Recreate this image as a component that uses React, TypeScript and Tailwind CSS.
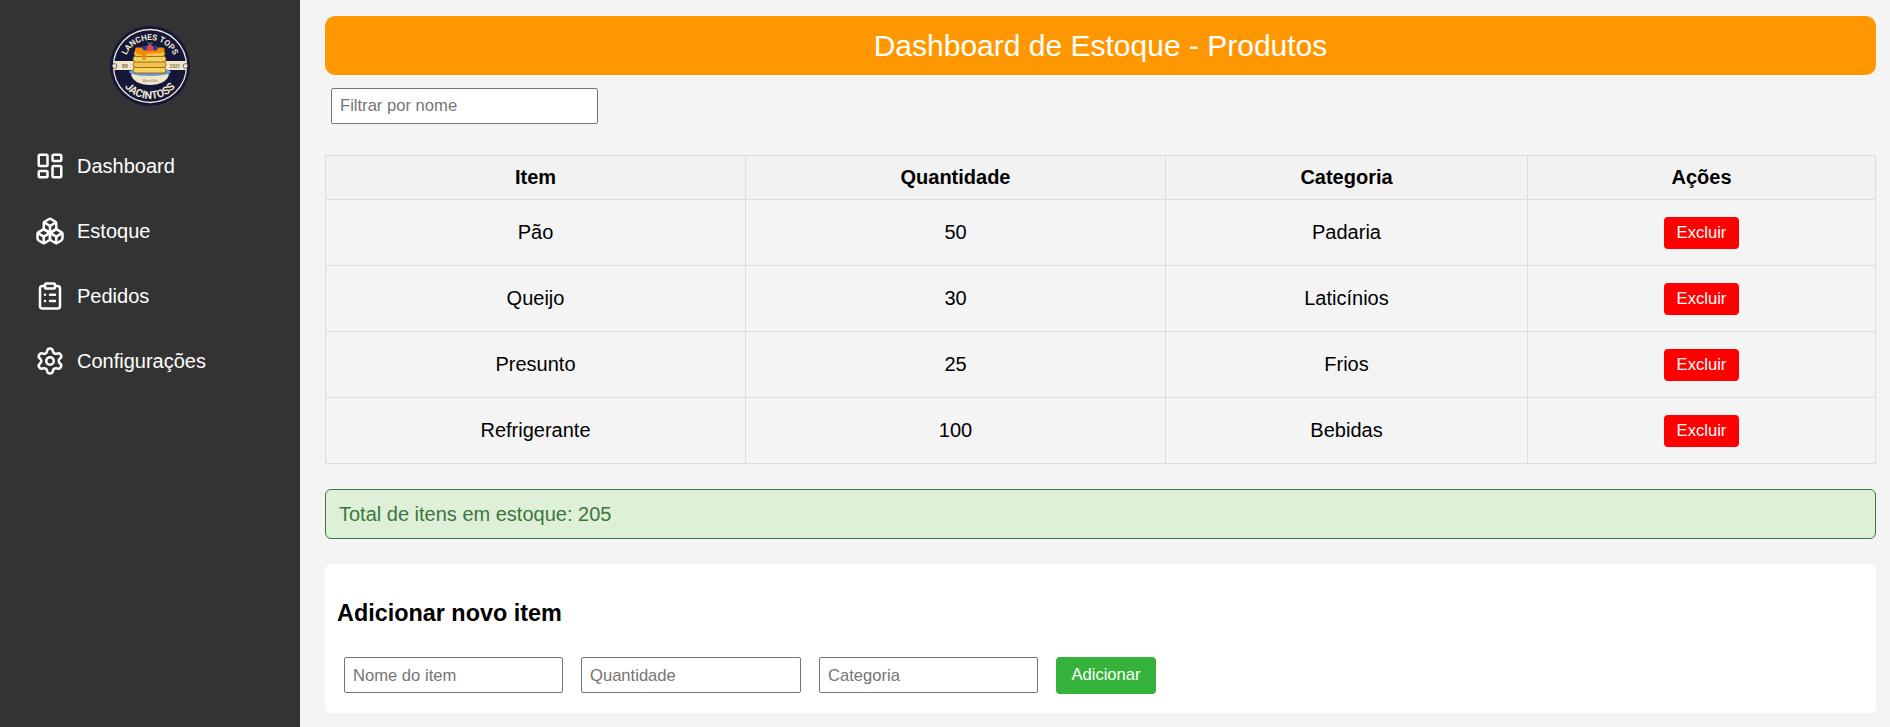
import { Boxes, ClipboardList, LayoutDashboard, Settings } from 'lucide-react';

const menu = [
  { label: 'Dashboard', Icon: LayoutDashboard },
  { label: 'Estoque', Icon: Boxes },
  { label: 'Pedidos', Icon: ClipboardList },
  { label: 'Configurações', Icon: Settings },
];

const items = [
  { name: 'Pão', qty: 50, category: 'Padaria' },
  { name: 'Queijo', qty: 30, category: 'Laticínios' },
  { name: 'Presunto', qty: 25, category: 'Frios' },
  { name: 'Refrigerante', qty: 100, category: 'Bebidas' },
];

function Logo() {
  return (
    <svg viewBox="0 0 80 80" className="w-[80px] h-[80px]">
      <defs>
        <path id="arcTop" d="M14 40 A26 26 0 0 1 66 40" />
        <path id="arcBottom" d="M7 40 A33 33 0 0 0 73 40" />
      </defs>
      <circle cx="40" cy="40" r="40" fill="#14173a" />
      <circle cx="40" cy="40" r="36.5" fill="none" stroke="#efe6cc" strokeWidth="1.3" />
      <rect x="4" y="35" width="72" height="9" fill="#efe6cc" />
      <circle cx="4.5" cy="40" r="2.4" fill="#efe6cc" stroke="#14173a" strokeWidth="0.6" />
      <circle cx="75.5" cy="40" r="2.4" fill="#efe6cc" stroke="#14173a" strokeWidth="0.6" />
      <path d="M21 48 H59 C58 55 50 59 40 59 C30 59 22 55 21 48 Z" fill="#efe6cc" />
      <text fontFamily="'Liberation Sans Narrow', Roboto, sans-serif" fontWeight="700" fontSize="8.2" fill="#efe6cc">
        <textPath href="#arcTop" startOffset="50%" textAnchor="middle">LANCHES TOPS</textPath>
      </text>
      <text fontFamily="'Liberation Sans Narrow', Roboto, sans-serif" fontWeight="700" fontSize="10.8" fill="#efe6cc">
        <textPath href="#arcBottom" startOffset="50%" textAnchor="middle">JACINTOSS</textPath>
      </text>
      <text x="15" y="41.5" fontFamily="Roboto, sans-serif" fontWeight="700" fontSize="4.5" fill="#8a6d3b" textAnchor="middle">BR</text>
      <text x="65" y="41.5" fontFamily="Roboto, sans-serif" fontWeight="700" fontSize="4.5" fill="#8a6d3b" textAnchor="middle">2021</text>
      <text x="40" y="55.5" fontFamily="Liberation Serif, serif" fontStyle="italic" fontSize="4.5" fill="#7d6238" textAnchor="middle">Brasília</text>
      <ellipse cx="40" cy="46" rx="21" ry="4" fill="#6f9ccf" />
      <rect x="23" y="41" width="33" height="6" rx="3" fill="#f5d260" stroke="#8a5a12" strokeWidth="0.8" />
      <rect x="23" y="35.5" width="33" height="6" rx="3" fill="#f2c14e" stroke="#8a5a12" strokeWidth="0.8" />
      <rect x="23" y="30" width="33" height="6" rx="3" fill="#f5d260" stroke="#8a5a12" strokeWidth="0.8" />
      <rect x="24" y="24.5" width="31" height="6" rx="3" fill="#f2c14e" stroke="#8a5a12" strokeWidth="0.8" />
      <path d="M26 21.5 H53 C56 23 55 27 50 27 C44 27 40 28 36 28 V32 A2 2 0 0 1 32 32 V29 C27 29 23 26 26 21.5 Z" fill="#f08c00" />
      <circle cx="35" cy="22" r="2.6" fill="#2c3f8f" />
      <circle cx="45" cy="22" r="2.6" fill="#2c3f8f" />
      <circle cx="40" cy="22" r="3.2" fill="#ef3f5a" />
      <path d="M40 18.5 L37.5 16.5 M40 18.5 L42.5 16.5" stroke="#2f9e44" strokeWidth="1.3" />
    </svg>
  );
}

export default function App() {
  return (
    <div className="flex h-screen overflow-hidden bg-[#f4f4f4] font-['Liberation_Sans',Arial,sans-serif] text-black">
      <aside className="w-[300px] shrink-0 bg-[#333333] text-white">
        <div className="flex justify-center pt-[26px]">
          <Logo />
        </div>
        <nav className="mt-[43px] flex flex-col gap-[32px] pl-[35px]">
          {menu.map(({ label, Icon }) => (
            <a key={label} href="#" className="flex h-[33px] items-center gap-[12px] text-[20px]">
              <Icon className="w-[30px] h-[30px]" strokeWidth={2} />
              {label}
            </a>
          ))}
        </nav>
      </aside>

      <main className="flex-1 pt-[16px] pl-[25px] pr-[14px]">
        <h1 className="h-[59px] rounded-[10px] bg-[#ff9800] text-center text-[30px] leading-[59px] text-white">
          Dashboard de Estoque - Produtos
        </h1>
        <div className="mt-[13px] ml-[6px]">
          <input
            placeholder="Filtrar por nome"
            className="block w-[267px] h-[36px] rounded-[2px] border border-[#767676] bg-white px-[8px] text-[16.6px] placeholder:text-[#757575]"
          />
        </div>

        <table className="mt-[31px] w-full table-fixed border-collapse text-[20px]">
          <thead>
            <tr className="h-[44px] bg-[#f2f2f2]">
              <th className="w-[420px] border border-[#dddddd] pb-[2px] font-bold">Item</th>
              <th className="w-[420px] border border-[#dddddd] pb-[2px] font-bold">Quantidade</th>
              <th className="w-[362px] border border-[#dddddd] pb-[2px] font-bold">Categoria</th>
              <th className="border border-[#dddddd] pb-[2px] font-bold">Ações</th>
            </tr>
          </thead>
          <tbody>
            {items.map(item => (
              <tr key={item.name} className="h-[66px]">
                <td className="border border-[#dddddd] pb-[2px] text-center">{item.name}</td>
                <td className="border border-[#dddddd] pb-[2px] text-center">{item.qty}</td>
                <td className="border border-[#dddddd] pb-[2px] text-center">{item.category}</td>
                <td className="border border-[#dddddd] text-center">
                  <button className="h-[32px] w-[75px] rounded-[4px] bg-[#ff0000] text-[16.6px] text-white">Excluir</button>
                </td>
              </tr>
            ))}
          </tbody>
        </table>

        <div className="mt-[25px] flex h-[50px] items-center rounded-[6px] border border-[#3c763d] bg-[#dff0d8] pl-[13px] text-[20px] text-[#3c763d]">
          Total de itens em estoque: 205
        </div>

        <section className="mt-[25px] h-[149px] rounded-[6px] bg-white pl-[12px] pt-[35px]">
          <h3 className="text-[23.4px] font-bold leading-[28px]">Adicionar novo item</h3>
          <form className="mt-[30px] ml-[7px] flex gap-[18px]">
            <input
              placeholder="Nome do item"
              className="w-[219px] h-[36px] rounded-[2px] border border-[#767676] bg-white px-[8px] pt-[1px] text-[16.6px] placeholder:text-[#757575]"
            />
            <input
              placeholder="Quantidade"
              className="w-[220px] h-[36px] rounded-[2px] border border-[#767676] bg-white px-[8px] pt-[1px] text-[16.6px] placeholder:text-[#757575]"
            />
            <input
              placeholder="Categoria"
              className="w-[219px] h-[36px] rounded-[2px] border border-[#767676] bg-white px-[8px] pt-[1px] text-[16.6px] placeholder:text-[#757575]"
            />
            <button type="button" className="h-[37px] w-[100px] rounded-[4px] bg-[#35b239] text-[16.6px] text-white">
              Adicionar
            </button>
          </form>
        </section>
      </main>
    </div>
  );
}
